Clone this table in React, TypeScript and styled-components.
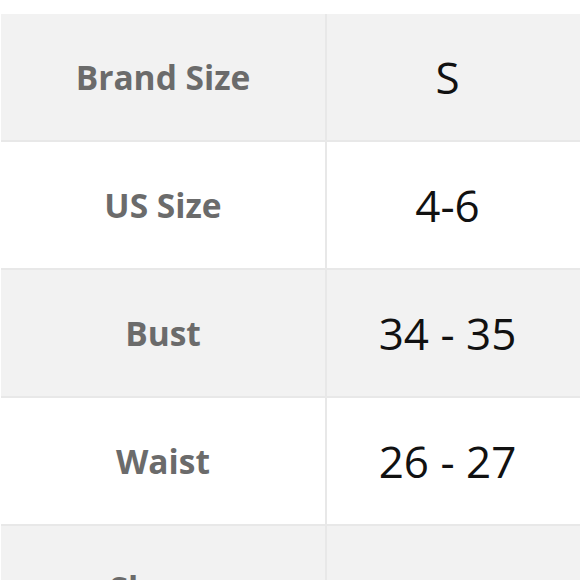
import styled, { createGlobalStyle } from "styled-components";

const GlobalStyle = createGlobalStyle`
  body {
    margin: 0;
    background: #ffffff;
    font-family: "Open Sans", "Noto Sans", sans-serif;
  }
`;

const Page = styled.div`
  padding: 14px 0 0 1px;
  height: 580px;
  box-sizing: border-box;
  overflow: hidden;
`;

const Table = styled.div`
  display: grid;
  grid-template-columns: 324px 1fr;
  gap: 2px;
  background: #e8e8e8;
`;

const Cell = styled.div<{ $shaded: boolean; $tall?: boolean }>`
  display: flex;
  align-items: center;
  justify-content: center;
  height: ${(p) => (p.$tall ? "168px" : "126px")};
  background: ${(p) => (p.$shaded ? "#f2f2f2" : "#ffffff")};
`;

const Label = styled.span`
  font-size: 33.5px;
  font-weight: 700;
  color: #6b6b6b;
  text-align: center;
  line-height: 44px;
  max-width: 200px;
`;

const Value = styled.span`
  font-size: 44px;
  color: #111111;
  margin-right: 12px;
`;

const rows = [
  { label: "Brand Size", value: "S" },
  { label: "US Size", value: "4-6" },
  { label: "Bust", value: "34 - 35" },
  { label: "Waist", value: "26 - 27" },
  { label: "Sleeve Length", value: "23 - 24" },
];

export default function App() {
  return (
    <>
      <GlobalStyle />
      <Page>
        <Table>
          {rows.map((row, i) => {
            const shaded = i % 2 === 0;
            const tall = i === rows.length - 1;
            return [
              <Cell key={row.label} $shaded={shaded} $tall={tall}>
                <Label>{row.label}</Label>
              </Cell>,
              <Cell key={row.label + "-v"} $shaded={shaded} $tall={tall}>
                <Value>{row.value}</Value>
              </Cell>,
            ];
          })}
        </Table>
      </Page>
    </>
  );
}
